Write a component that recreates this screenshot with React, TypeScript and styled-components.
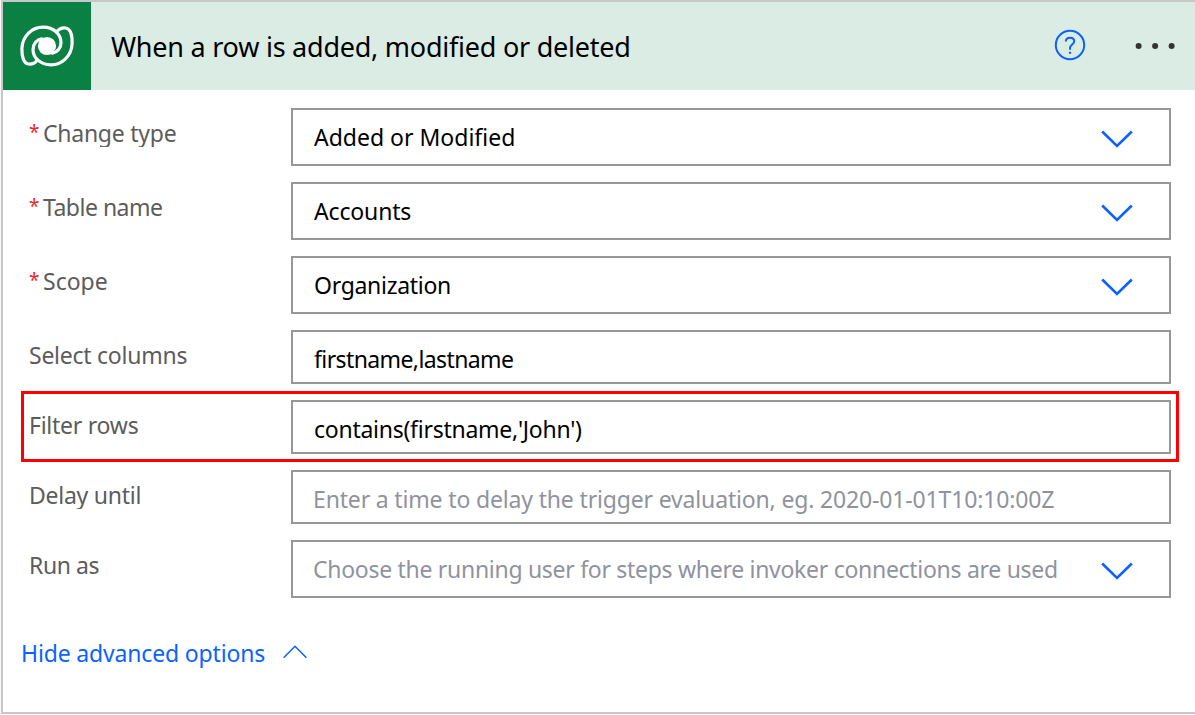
import React from "react";
import styled, { createGlobalStyle } from "styled-components";

const GlobalStyle = createGlobalStyle`
  * { box-sizing: border-box; }
  body { margin: 0; background: #fafafa; font-family: "Noto Sans", sans-serif; }
`;

const Card = styled.main`
  width: 1194px;
  height: 714px;
  margin-left: 1px;
  border: 2px solid #c8c8c8;
  border-right: 0;
  background: #fff;
`;

const Header = styled.header`
  display: flex;
  align-items: center;
  height: 88px;
  background: #dbece4;
`;

const Logo = styled.div`
  display: flex;
  width: 88px;
  height: 88px;
  background: #0b8043;
`;

const Title = styled.h1`
  flex: 1;
  margin: 2px 0 0 20px;
  font-size: 27px;
  line-height: 36px;
  font-weight: 400;
  letter-spacing: -0.24px;
  color: #000;
`;

const HeaderActions = styled.div`
  display: flex;
  align-items: center;
  gap: 49px;
  margin: 0 20px 0 0;
`;

const Form = styled.section`
  display: flex;
  flex-direction: column;
  gap: 16px;
  padding: 18px 24px 0 26px;
`;

const Row = styled.div`
  position: relative;
  display: grid;
  grid-template-columns: 262px 880px;
  align-items: start;
`;

const Highlight = styled.div`
  position: absolute;
  top: -9px;
  left: -8px;
  width: 1158px;
  height: 71px;
  border: 3px solid #f00;
  pointer-events: none;
`;

const Label = styled.label<{ $spacing?: number }>`
  display: flex;
  height: 30px;
  margin-top: 9px;
  overflow: hidden;
  font-size: 23px;
  line-height: 32px;
  letter-spacing: ${(p) => p.$spacing ?? -0.25}px;
  white-space: nowrap;
  color: #5c5c5c;
`;

const Required = styled.span`
  width: 14px;
  font-size: 19px;
  line-height: 30px;
  letter-spacing: 0;
  color: #e8262b;
`;

const Field = styled.div<{ $tall?: boolean }>`
  display: flex;
  align-items: center;
  justify-content: space-between;
  height: ${(p) => (p.$tall ? 58 : 54)}px;
  padding: ${(p) => (p.$tall ? 0 : 4)}px 36px 0 21px;
  border: 2px solid #979797;
  background: #fff;

  svg {
    margin-top: 3px;
  }
`;

const Value = styled.span<{ $placeholder?: boolean; $spacing?: number }>`
  font-size: 23px;
  line-height: 32px;
  letter-spacing: ${(p) => p.$spacing ?? 0}px;
  white-space: nowrap;
  margin-left: ${(p) => (p.$placeholder ? -1 : 0)}px;
  color: ${(p) => (p.$placeholder ? "#8f939e" : "#000")};
`;

const AdvancedToggle = styled.button`
  display: flex;
  align-items: center;
  gap: 18px;
  margin: 39px 0 0 18px;
  padding: 0;
  border: 0;
  background: none;
  font: 400 23px/32px "Noto Sans", sans-serif;
  letter-spacing: -0.16px;
  color: #0b62ff;

  svg {
    margin-bottom: 3px;
  }
`;

const DataverseIcon = () => (
  <svg width="88" height="88" viewBox="0 0 88 88" fill="none" stroke="#fff" strokeWidth="3.2" strokeLinecap="round">
    <path d="M34.5 57.8C31.8 61.8 28.5 62.3 25.5 62C20.5 61.5 18.7 54 18.9 46.5C19.4 34 29 25.2 40 25.2C51 25.2 58 32.5 58 40.5C58 46 54.5 50.4 49.5 51.2" />
    <path d="M53.5 30.2C56.2 26.2 59.5 25.7 62.5 26C67.5 26.6 69.3 34 69.1 41.5C68.6 54 59 62.8 48 62.8C37 62.8 30 55.5 30 47.5C30 42 33.5 37.6 38.5 36.8" />
    <circle cx="44" cy="44" r="9.1" fill="#fff" stroke="none" />
  </svg>
);

const HelpIcon = () => (
  <svg width="32" height="34" viewBox="0 0 32 34" fill="none" stroke="#0b62ff" strokeWidth="2">
    <circle cx="16" cy="16" r="14.2" />
    <path d="M11.8 12.6C11.8 9.9 13.6 8.7 16.1 8.7C18.7 8.7 20.2 10.2 20.2 12.3C20.2 15.3 16 15.8 16 19V20.8" />
    <path d="M14.9 23.8H17.1" />
  </svg>
);

const MoreIcon = () => (
  <svg width="40" height="8" viewBox="0 0 40 8" fill="#333">
    <circle cx="3.6" cy="4" r="3" />
    <circle cx="20.1" cy="4" r="3" />
    <circle cx="36.6" cy="4" r="3" />
  </svg>
);

const ChevronDown = () => (
  <svg width="32" height="18" viewBox="0 0 32 18" fill="none" stroke="#0b62ff" strokeWidth="2.6">
    <path d="M1.2 1.5L16 16L30.8 1.5" />
  </svg>
);

const ChevronUp = () => (
  <svg width="24" height="14" viewBox="0 0 24 14" fill="none" stroke="#0b62ff" strokeWidth="1.5">
    <path d="M0.6 12.7L12 1.3L23.4 12.7" />
  </svg>
);

type FormField = {
  label: string;
  labelSpacing?: number;
  value: string;
  spacing?: number;
  required?: boolean;
  placeholder?: boolean;
  dropdown?: boolean;
  highlighted?: boolean;
};

const fields: FormField[] = [
  { label: "Change type", value: "Added or Modified", required: true, dropdown: true },
  { label: "Table name", labelSpacing: -0.5, value: "Accounts", spacing: -0.15, required: true, dropdown: true },
  { label: "Scope", labelSpacing: 0, value: "Organization", spacing: -0.3, required: true, dropdown: true },
  { label: "Select columns", value: "firstname,lastname", spacing: -0.6 },
  { label: "Filter rows", value: "contains(firstname,'John')", spacing: -0.26, highlighted: true },
  {
    label: "Delay until",
    value: "Enter a time to delay the trigger evaluation, eg. 2020-01-01T10:10:00Z",
    spacing: -0.16,
    placeholder: true,
  },
  {
    label: "Run as",
    labelSpacing: -0.4,
    value: "Choose the running user for steps where invoker connections are used",
    spacing: -0.29,
    placeholder: true,
    dropdown: true,
  },
];

export default function App() {
  return (
    <>
      <GlobalStyle />
      <Card>
        <Header>
          <Logo>
            <DataverseIcon />
          </Logo>
          <Title>When a row is added, modified or deleted</Title>
          <HeaderActions>
            <HelpIcon />
            <MoreIcon />
          </HeaderActions>
        </Header>
        <Form>
          {fields.map((f) => (
            <Row key={f.label}>
              <Label $spacing={f.labelSpacing}>
                {f.required && <Required>*</Required>}
                {f.label}
              </Label>
              <Field $tall={f.dropdown}>
                <Value $placeholder={f.placeholder} $spacing={f.spacing}>
                  {f.value}
                </Value>
                {f.dropdown && <ChevronDown />}
              </Field>
              {f.highlighted && <Highlight />}
            </Row>
          ))}
        </Form>
        <AdvancedToggle>
          Hide advanced options
          <ChevronUp />
        </AdvancedToggle>
      </Card>
    </>
  );
}
